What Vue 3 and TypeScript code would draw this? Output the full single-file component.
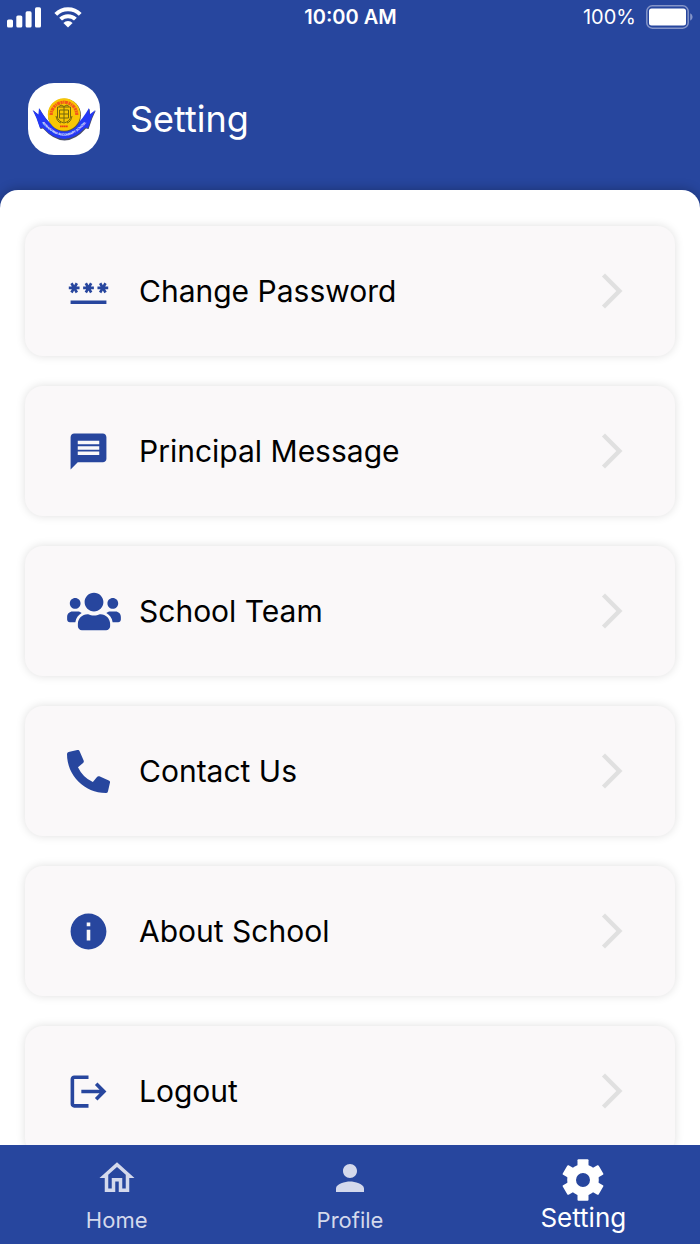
<script setup lang="ts">
import { ref } from 'vue'

interface MenuItem {
  label: string
  viewBox: string
  wide?: boolean
  path: string
}

interface Tab {
  label: string
  path?: string
}

const items: MenuItem[] = [
  {
    label: 'Change Password',
    viewBox: '0 0 24 24',
    path: 'M2,17h20v2H2V17z M3.15,12.95L4,11.47l0.85,1.48l1.3-0.75L5.3,10.72H7v-1.5H5.3l0.85-1.47L4.85,7L4,8.47L3.15,7l-1.3,0.75 L2.7,9.22H1v1.5h1.7L1.85,12.2L3.15,12.95z M9.85,12.2l1.3,0.75L12,11.47l0.85,1.48l1.3-0.75l-0.85-1.48H15v-1.5h-1.7l0.85-1.47 L12.85,7L12,8.47L11.15,7l-1.3,0.75l0.85,1.47H9v1.5h1.7L9.85,12.2z M23,9.22h-1.7l0.85-1.47L20.85,7L20,8.47L19.15,7l-1.3,0.75 l0.85,1.47H17v1.5h1.7l-0.85,1.48l1.3,0.75L20,11.47l0.85,1.48l1.3-0.75l-0.85-1.48H23V9.22z',
  },
  {
    label: 'Principal Message',
    viewBox: '0 0 24 24',
    path: 'M20 2H4c-1.1 0-1.99.9-1.99 2L2 22l4-4h14c1.1 0 2-.9 2-2V4c0-1.1-.9-2-2-2zm-2 12H6v-2h12v2zm0-3H6V9h12v2zm0-3H6V6h12v2z',
  },
  {
    label: 'School Team',
    viewBox: '0 0 640 512',
    wide: true,
    path: 'M96 224c35.3 0 64-28.7 64-64s-28.7-64-64-64-64 28.7-64 64 28.7 64 64 64zm448 0c35.3 0 64-28.7 64-64s-28.7-64-64-64-64 28.7-64 64 28.7 64 64 64zm32 32h-64c-17.6 0-33.5 7.1-45.1 18.6 40.3 22.1 68.9 62 75.1 109.4h66c17.7 0 32-14.3 32-32v-32c0-35.3-28.7-64-64-64zm-256 0c61.9 0 112-50.1 112-112S381.9 32 320 32 208 82.1 208 144s50.1 112 112 112zm76.8 32h-8.3c-20.8 10-43.9 16-68.5 16s-47.6-6-68.5-16h-8.3C179.6 288 128 339.6 128 403.2V432c0 26.5 21.5 48 48 48h288c26.5 0 48-21.5 48-48v-28.8c0-63.6-51.6-115.2-115.2-115.2zm-223.7-13.4C161.5 263.1 145.6 256 128 256H64c-35.3 0-64 28.7-64 64v32c0 17.7 14.3 32 32 32h65.9c6.3-47.4 34.9-87.3 75.2-109.4z',
  },
  {
    label: 'Contact Us',
    viewBox: '0 0 512 512',
    path: 'M497.39 361.8l-112-48a24 24 0 0 0-28 6.9l-49.6 60.6A370.66 370.66 0 0 1 130.6 204.11l60.6-49.6a23.94 23.94 0 0 0 6.9-28l-48-112A24.16 24.16 0 0 0 122.6.61l-104 24A24 24 0 0 0 0 48c0 256.5 207.9 464 464 464a24 24 0 0 0 23.4-18.6l24-104a24.29 24.29 0 0 0-14.01-27.6z',
  },
  {
    label: 'About School',
    viewBox: '0 0 24 24',
    path: 'M12 2C6.48 2 2 6.48 2 12s4.48 10 10 10 10-4.48 10-10S17.52 2 12 2zm1 15h-2v-6h2v6zm0-8h-2V7h2v2z',
  },
  {
    label: 'Logout',
    viewBox: '0 0 24 24',
    path: 'M17 7l-1.41 1.41L18.17 11H8v2h10.17l-2.58 2.58L17 17l5-5zM4 5h8V3H4c-1.1 0-2 .9-2 2v14c0 1.1.9 2 2 2h8v-2H4V5z',
  },
]

const tabs: Tab[] = [
  {
    label: 'Home',
    path: 'M12 5.69l5 4.5V18h-2v-6H9v6H7v-7.81l5-4.5M12 3L2 12h3v8h6v-6h2v6h6v-8h3L12 3z',
  },
  {
    label: 'Profile',
    path: 'M12 12c2.21 0 4-1.79 4-4s-1.79-4-4-4-4 1.79-4 4 1.79 4 4 4zm0 2c-2.67 0-8 1.34-8 4v2h16v-2c0-2.66-5.33-4-8-4z',
  },
  { label: 'Setting' },
]

const activeTab = ref('Setting')
const teeth = [0, 60, 120, 180, 240, 300]
</script>

<template>
  <div class="app">
    <div class="status">
      <div class="status-left">
        <svg class="signal" viewBox="0 0 35 21" aria-hidden="true">
          <rect x="0" y="12.5" width="6" height="8" rx="1.6" />
          <rect x="9.3" y="8.5" width="6" height="12" rx="1.6" />
          <rect x="18.6" y="4.3" width="6" height="16.2" rx="1.6" />
          <rect x="28" y="0.3" width="6" height="20.2" rx="1.6" />
        </svg>
        <svg class="wifi" viewBox="0 0 28 21" aria-hidden="true">
          <path d="M1.8 7.4A17.3 17.3 0 0 1 26.2 7.4" />
          <path d="M6.6 12.2A10.5 10.5 0 0 1 21.4 12.2" />
          <path class="wifi-dot" d="M14 20.4L9.4 15.9A6.5 6.5 0 0 1 18.6 15.9Z" />
        </svg>
      </div>
      <span class="time">10:00 AM</span>
      <div class="status-right">
        <span>100%</span>
        <svg class="battery" viewBox="0 0 48 24" aria-hidden="true">
          <rect class="shell" x="0.8" y="0.8" width="41.4" height="22.4" rx="5.5" />
          <rect x="3" y="3.6" width="37" height="16.8" rx="2.5" />
          <path class="nub" d="M44.2 8.2a4.2 4.2 0 0 1 0 7.6z" />
        </svg>
      </div>
    </div>

    <header class="header">
      <svg class="logo" viewBox="0 0 72 72" role="img" aria-label="School logo">
        <defs>
          <path id="ribbon-line" d="M9.5 34Q36 71.5 62.5 34" />
        </defs>
        <rect width="72" height="72" rx="26" fill="#fff" />
        <path d="M5.4 27.6l5.6 4.6.6-6.4Q36.6 70 61.6 25.8l.6 6.4 5.6-4.6-3.6 8L60.6 46l-2.6-.4Q36.6 69.500 15 45.600l-2.500.4L9 35.600z" fill="#4a4e68" />
        <path d="M4.600 27l5.800 4.400L11 25Q36 69 61 25l.6 6.400L67.400 27l-3.800 8L60 45.200l-2.600-.6Q36 67.500 14.600 44.600l-2.600.6L8.400 35z" fill="#2439f5" />
        <circle cx="36.500" cy="32.200" r="16.400" fill="#5b5538" />
        <circle cx="36" cy="31.500" r="16.200" fill="#f8c604" />
        <path d="M23.200 32A12.800 12.800 0 0 1 48.800 32" fill="none" stroke="#f4571b" stroke-width="3.200" stroke-dasharray="2.200 .5 1.400 .5 3 .6" />
        <g fill="none" stroke="#75640d" stroke-width="1">
          <path d="M29.500 24h13v10q0 4-6.500 6-6.500-2-6.500-6zM31.500 27h9v8h-9zM32 31h8M36 24v15" />
          <path d="M31 23.500l2-1.500 3 1.500 3-1.500 2 1.500M28 33q1 6 5 7M44 33q-1 6-5 7" />
        </g>
        <path d="M32 43.400h8" stroke="#e93e16" stroke-width="1.800" stroke-dasharray="1.600 .3" />
        <text class="logo-text"><textPath href="#ribbon-line" startOffset="50%" text-anchor="middle">ANNAPURNA SECONDARY SCHOOL</textPath></text>
      </svg>
      <h1>Setting</h1>
    </header>

    <main class="sheet">
      <button v-for="item in items" :key="item.label" type="button" class="card">
        <span class="icon-slot">
          <svg :class="['icon', { wide: item.wide }]" :viewBox="item.viewBox" aria-hidden="true">
            <path :d="item.path" />
          </svg>
        </span>
        <span class="card-label">{{ item.label }}</span>
        <svg class="chevron" viewBox="0 0 24 24" aria-hidden="true">
          <path d="M6.23 20.23L8 22l10-10L8 2 6.23 3.77 14.46 12z" />
        </svg>
      </button>
    </main>

    <nav class="tabs">
      <button
        v-for="tab in tabs"
        :key="tab.label"
        type="button"
        :class="['tab', { active: activeTab === tab.label }]"
        @click="activeTab = tab.label"
      >
        <svg v-if="tab.path" class="tab-icon" viewBox="0 0 24 24" aria-hidden="true">
          <path :d="tab.path" />
        </svg>
        <svg v-else class="tab-icon" viewBox="0 0 42 42" aria-hidden="true">
          <circle cx="21" cy="21" r="11.4" fill="none" stroke="currentColor" stroke-width="8.8" />
          <rect
            v-for="angle in teeth"
            :key="angle"
            x="15.5"
            y="0.2"
            width="11"
            height="10"
            rx="1"
            :transform="`rotate(${angle} 21 21)`"
          />
        </svg>
        <span>{{ tab.label }}</span>
      </button>
    </nav>
  </div>
</template>

<style>
body {
  background: #27469e;
}
</style>

<style scoped>
.app {
  display: flex;
  flex-direction: column;
  height: 100vh;
  overflow: hidden;
  background: #27469e;
  color: #fff;
  font-family: Inter, "Liberation Sans", sans-serif;
}

button {
  border: 0;
  margin: 0;
  padding: 0;
  font: inherit;
  cursor: pointer;
}

svg {
  display: block;
  flex: none;
  fill: currentColor;
}

.status {
  display: grid;
  grid-template-columns: 1fr auto 1fr;
  align-items: center;
  flex: none;
  height: 34px;
  padding: 0 6px 0 7px;
  font-size: 20px;
  line-height: 24px;
}

.status-left,
.status-right {
  display: flex;
  align-items: center;
  gap: 12px;
}

.status-right {
  justify-content: flex-end;
}

.signal {
  width: 35px;
  height: 21px;
}

.wifi {
  width: 28px;
  height: 21px;
}

.wifi path {
  fill: none;
  stroke: currentColor;
  stroke-width: 4;
}

.wifi .wifi-dot {
  fill: currentColor;
  stroke: none;
}

.time {
  font-weight: 600;
}

.status-right {
  gap: 10px;
}

.battery {
  width: 48px;
  height: 24px;
}

.shell {
  fill: none;
  stroke: #8595c8;
  stroke-width: 1.5;
}

.nub {
  fill: #8595c8;
}

.header {
  display: flex;
  align-items: center;
  flex: none;
  gap: 30px;
  height: 156px;
  padding: 14px 28px 0;
  box-sizing: border-box;
}

.logo {
  width: 72px;
  height: 72px;
}

.logo-text {
  fill: #fff;
  font-size: 3px;
  font-weight: 700;
}

h1 {
  margin: 0;
  font-size: 36px;
  line-height: 44px;
  font-weight: 400;
}

.sheet {
  display: flex;
  flex-direction: column;
  flex: 1;
  gap: 30px;
  min-height: 0;
  padding: 36px 25px;
  overflow-y: auto;
  scrollbar-width: none;
  background: #fff;
  border-radius: 18px 18px 0 0;
  box-shadow: 0 0 12px rgba(0, 0, 0, 0.3);
}

.card {
  display: flex;
  align-items: center;
  flex: none;
  height: 130px;
  padding: 0 42px;
  background: #faf8f9;
  border-radius: 18px;
  box-shadow: 0 0 10px rgba(0, 0, 0, 0.13);
  color: #000;
  text-align: left;
}

.icon-slot {
  flex: none;
  width: 72px;
  color: #27469e;
}

.icon {
  width: 43px;
  height: 43px;
}

.icon.wide {
  width: 54px;
}

.card-label {
  flex: 1;
  font-size: 30px;
  line-height: 36px;
}

.chevron {
  width: 42px;
  height: 42px;
  color: #e0e0e0;
}

.tabs {
  position: relative;
  display: grid;
  grid-template-columns: repeat(3, 1fr);
  flex: none;
  height: 99px;
  background: #27469e;
}

.tab {
  display: flex;
  flex-direction: column;
  align-items: center;
  justify-content: center;
  gap: 8px;
  background: transparent;
  color: #d4d9ec;
  font-size: 22px;
  line-height: 26px;
}

.tab-icon {
  width: 42px;
  height: 42px;
}

.tab.active {
  gap: 4px;
  color: #fff;
  font-size: 26px;
}
</style>
